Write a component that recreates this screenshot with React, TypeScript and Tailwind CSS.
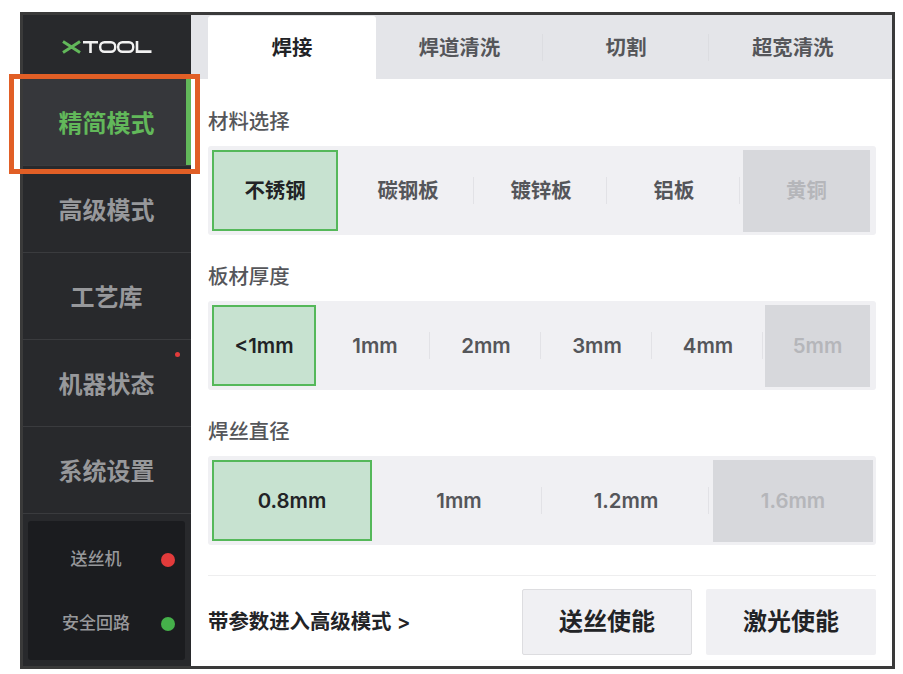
const font = { fontFamily: '"Inter","Noto Sans CJK SC",sans-serif' };

function Logo() {
  return (
    <svg width="90" height="14" viewBox="0 0 90 14" fill="none">
      <path d="M1 1.5 L18 12.5 M18 1.5 L1 12.5" stroke="#62b85a" strokeWidth="3" />
      <path d="M21 2.2 H36 M28.5 2 V13" stroke="#f2f2f2" strokeWidth="2.6" />
      <rect x="38.2" y="2.2" width="15" height="9.6" rx="4.2" stroke="#f2f2f2" strokeWidth="2.4" />
      <rect x="56.2" y="2.2" width="15" height="9.6" rx="4.2" stroke="#f2f2f2" strokeWidth="2.4" />
      <path d="M75 1 V11.6 H89.5" stroke="#f2f2f2" strokeWidth="2.6" />
    </svg>
  );
}

function NavItem({ label, active, dot }: { label: string; active?: boolean; dot?: boolean }) {
  return (
    <div
      className={`relative flex h-[87px] items-center justify-center border-b border-[#3a3b3e] pt-[3px] text-[24px] font-semibold ${
        active ? "bg-[#36373b] text-[#62b85a]" : "text-[#97989b]"
      }`}
    >
      <span className="pr-[1px]">{label}</span>
      {active && <span className="absolute right-0 top-0 h-full w-[5px] bg-[#62b85a]" />}
      {dot && <span className="absolute left-[152px] top-[12px] h-[5px] w-[5px] rounded-full bg-[#e23b3b]" />}
    </div>
  );
}

type Opt = { label: string; state?: "on" | "off"; rule?: boolean };

function Options({ cols, items, offClass }: { cols: string; items: Opt[]; offClass: string }) {
  return (
    <div className={`grid h-[89px] rounded-[3px] bg-[#f0f0f3] ${cols}`}>
      {items.map((it) => (
        <div key={it.label} className="relative flex items-center justify-center text-[20.4px] font-semibold">
          {it.state === "on" && (
            <div className="ml-[4px] mr-[3px] flex h-[81px] w-full items-center justify-center border-2 border-[#55b85a] bg-[#c7e2d0] pt-[1px] text-[#222326]">
              {it.label}
            </div>
          )}
          {it.state === "off" && (
            <div className={`flex h-[82px] items-center justify-center bg-[#d7d8dc] pt-[2px] text-[#b5b6ba] ${offClass}`}>
              {it.label}
            </div>
          )}
          {!it.state && <span className="pl-[1px] pt-[2px] text-[#55565a]">{it.label}</span>}
          {it.rule && <span className="absolute right-0 top-[31px] h-[27px] w-[1px] bg-[#e2e2e6]" />}
        </div>
      ))}
    </div>
  );
}

function Section({ title, children, className }: { title: string; children: React.ReactNode; className?: string }) {
  return (
    <div className={className}>
      <div className="mb-[9px] h-[30px] text-[20.4px] font-medium leading-[30px] text-[#55565a]">{title}</div>
      {children}
    </div>
  );
}

export default function App() {
  const tabs = ["焊接", "焊道清洗", "切割", "超宽清洗"];
  return (
    <div className="relative h-[674px] w-[903px] bg-white pl-[20px] pt-[12px]" style={font}>
      <div className="flex h-[657px] w-[875px] border-[3px] border-[#3a3a3a]">
        <aside className="flex w-[168px] flex-col bg-[#28292c]">
          <div className="flex h-[64px] items-center justify-center">
            <Logo />
          </div>
          <NavItem label="精简模式" active />
          <NavItem label="高级模式" />
          <NavItem label="工艺库" />
          <NavItem label="机器状态" dot />
          <NavItem label="系统设置" />
          <div className="mx-[5px] mt-[7px] flex h-[139px] w-[157px] flex-col justify-center rounded-[3px] bg-[#1b1c1f] pt-[2px] text-[#97989b]">
            <div className="flex h-[20px] items-center text-[17px] font-medium">
              <span className="w-[133px] pl-[3px] text-center">送丝机</span>
              <span className="h-[14px] w-[14px] rounded-full bg-[#e23b3b]" />
            </div>
            <div className="mt-[44px] flex h-[20px] items-center text-[17px] font-medium">
              <span className="w-[133px] pl-[3px] text-center">安全回路</span>
              <span className="h-[14px] w-[14px] rounded-full bg-[#45b04a]" />
            </div>
          </div>
        </aside>
        <main className="flex min-w-0 flex-1 flex-col bg-white">
          <div className="flex h-[64px] bg-[#e4e5e9] pl-[17px] pr-[16px]">
            {tabs.map((t, i) => (
              <div
                key={t}
                className={`relative flex items-center justify-center pt-[2px] text-[20.4px] font-semibold ${
                  i === 0 ? "mt-[1px] w-[168px] rounded-t-[3px] bg-white text-[#222326]" : "flex-1 text-[#55565a]"
                }`}
              >
                {t}
                {i > 0 && i < 3 && <span className="absolute right-0 top-[19px] h-[27px] w-[1px] bg-[#dcdde1]" />}
              </div>
            ))}
          </div>
          <div className="flex flex-1 flex-col pl-[17px] pr-[16px] pt-[28px]">
            <Section title="材料选择">
              <Options
                cols="grid-cols-[repeat(4,133px)_1fr]"
                offClass="ml-[3px] mr-[6px] w-full"
                items={[
                  { label: "不锈钢", state: "on" },
                  { label: "碳钢板", rule: true },
                  { label: "镀锌板", rule: true },
                  { label: "铝板", rule: true },
                  { label: "黄铜", state: "off" },
                ]}
              />
            </Section>
            <Section title="板材厚度" className="mt-[27px]">
              <Options
                cols="grid-cols-[repeat(5,111px)_1fr]"
                offClass="ml-[2px] mr-[6px] w-full"
                items={[
                  { label: "<1mm", state: "on" },
                  { label: "1mm", rule: true },
                  { label: "2mm", rule: true },
                  { label: "3mm", rule: true },
                  { label: "4mm", rule: true },
                  { label: "5mm", state: "off" },
                ]}
              />
            </Section>
            <Section title="焊丝直径" className="mt-[27px]">
              <Options
                cols="grid-cols-4"
                offClass="ml-[4px] mr-[3px] w-full"
                items={[
                  { label: "0.8mm", state: "on" },
                  { label: "1mm", rule: true },
                  { label: "1.2mm", rule: true },
                  { label: "1.6mm", state: "off" },
                ]}
              />
            </Section>
            <div className="mt-[30px] flex h-[80px] items-center border-t border-[#eeeeef] pt-[12px]">
              <span className="flex-1 pt-[2px] text-[20.4px] font-semibold text-[#222326]">带参数进入高级模式 &gt;</span>
              <div className="flex gap-[14px] text-[24px] font-semibold text-[#222326]">
                <div className="flex h-[66px] w-[170px] items-center justify-center rounded-[2px] border border-[#dddde0] bg-[#f0f0f3]">
                  送丝使能
                </div>
                <div className="flex h-[66px] w-[170px] items-center justify-center rounded-[2px] bg-[#f0f0f3]">
                  激光使能
                </div>
              </div>
            </div>
          </div>
        </main>
      </div>
      <div className="pointer-events-none absolute left-[9px] top-[74px] h-[100px] w-[191px] border-[5px] border-[#e15f26]" />
    </div>
  );
}
